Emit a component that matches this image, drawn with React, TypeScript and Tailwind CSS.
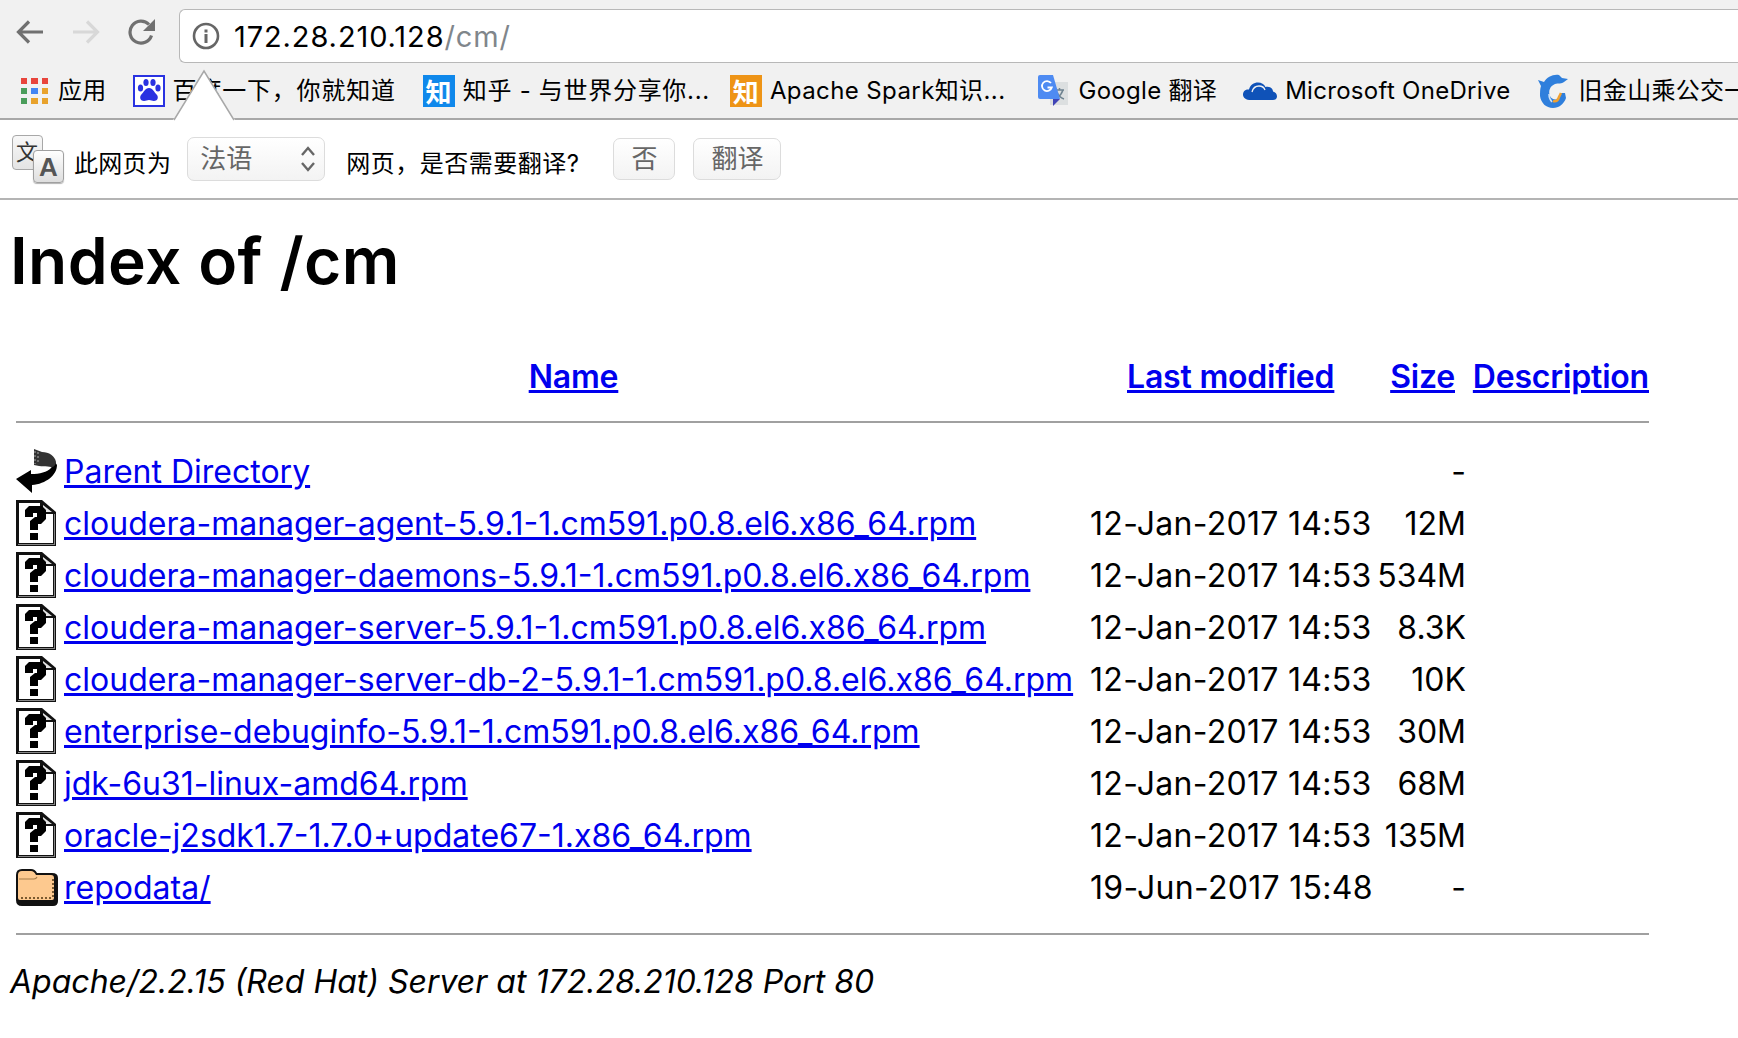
import React from "react";

const SANS = "font-['Inter','Noto_Sans_CJK_SC',sans-serif]";

function Unknown() {
  return (
    <svg width="40" height="46" viewBox="0 0 20 23" className="block">
      <path d="M0 0h13l7 6v17H0z" fill="#111" />
      <path d="M1.500 1.500h10.500v5.500h6.500v14.500H1.500z" fill="#fff" />
      <path d="M13.500 2.500l4.500 3.500h-4.500z" fill="#e4e4e4" />
      <path d="M19 7h.500v15.500H1v-.5h18z" fill="#888" />
      <path d="M4.500 8.500V5L6.500 3h6.500l2 2v4.500L12.500 12h-1.500v3H7v-4.500L9.500 8.500h1V6.500H8.500v2z" fill="#000" />
      <path d="M7 16.500h4v3.500H7z" fill="#000" />
    </svg>
  );
}

function Back() {
  return (
    <svg width="42" height="44" viewBox="0 0 42 44" className="block">
      <path d="M0 30L15 21V25C24 25 31 23 35 19L39 13L41 16C41 26 30 35 16 36V44Z" fill="#000" />
      <path d="M18 0L26 3C33 3 39 7 40 13C40 16 37 19 35 18C31 17 25 18 18 16Z" fill="#333" />
      <path d="M19 2v13M22 3v12" stroke="#aaa" strokeWidth="1" strokeDasharray="2 2" />
    </svg>
  );
}

function Folder() {
  return (
    <svg width="42" height="38" viewBox="0 0 42 38" className="block">
      <path d="M0 7q0-6 6-6h9q4 0 6 4h15q6 0 6 5v23q0 5-5 5H6q-6 0-6-6z" fill="#111" />
      <path d="M2 7q0-4 4-4h9q3 0 5 4h15q3 0 3 3v20q0 2-2 2H4q-2 0-2-2z" fill="#fdc98f" />
      <path d="M3 11h15q2 0 3-2" stroke="#a67c48" strokeWidth="1.200" fill="none" />
      <path d="M5 30h32M37 11v19" stroke="#7a5a30" strokeWidth="2" strokeDasharray="2 2" />
    </svg>
  );
}

function AppsIcon() {
  const colors = ["#e8453c", "#e8453c", "#e8453c", "#4a9d5b", "#4285f4", "#e8a22c", "#4a9d5b", "#e8a22c", "#e8a22c"];
  return (
    <div className="grid w-[27px] h-[26px] grid-cols-3 gap-[4px] shrink-0">
      {colors.map((c, i) => (
        <div key={i} style={{ backgroundColor: c }} />
      ))}
    </div>
  );
}

function BaiduIcon() {
  return (
    <svg width="32" height="32" viewBox="0 0 32 32" className="shrink-0">
      <rect x="1" y="1" width="30" height="30" fill="#fff" stroke="#2932e1" strokeWidth="2" />
      <g fill="#2932e1">
        <ellipse cx="7.5" cy="13" rx="2.6" ry="3.6" />
        <ellipse cx="13" cy="7.5" rx="2.6" ry="3.6" />
        <ellipse cx="20" cy="7.5" rx="2.6" ry="3.6" />
        <ellipse cx="25" cy="13" rx="2.6" ry="3.6" />
        <path d="M16 13c4 0 5 4 8 7 2 3 0 6-3 6-2 0-3-1-5-1s-3 1-5 1c-3 0-5-3-3-6 3-3 4-7 8-7z" />
      </g>
    </svg>
  );
}

function Zhi({ bg }: { bg: string }) {
  return (
    <div
      className={`w-[32px] h-[32px] shrink-0 flex items-center justify-center text-white text-[26px] font-bold leading-none font-['Noto_Sans_CJK_SC',sans-serif] ${bg}`}
    >
      知
    </div>
  );
}

function GoogleIcon() {
  return (
    <svg width="30" height="32" viewBox="0 0 30 32" className="shrink-0">
      <rect x="12" y="7" width="18" height="23" fill="#dcdfe0" />
      <path d="M17 15h9M21.500 13v2M19 23c3-2 5-5 6-8M19 17c1 3 4 6 7 7" stroke="#6f8390" strokeWidth="1.500" fill="none" />
      <path d="M2 0h13l7 24H2a2 2 0 0 1-2-2V2a2 2 0 0 1 2-2z" fill="#4e8bf2" />
      <path d="M15 24h7l-7 7z" fill="#3f43b5" />
      <path d="M13 8a5 5 0 1 0 .8 4.500H9.500" stroke="#fff" strokeWidth="1.800" fill="none" />
    </svg>
  );
}

function OneDrive() {
  return (
    <svg width="34" height="24" viewBox="0 0 34 24" className="shrink-0">
      <path
        d="M8 21C3 21 0 19 0 15.500 0 12 3 10 6 10.500 7 6 11 3.500 15 3.500c3.500 0 6 1.500 7.500 4.500C27 7 30 9.500 30 12.500c2.500.5 4 2.500 4 5 0 2.500-2 3.500-4 3.500z"
        fill="#0f52b8"
      />
      <path d="M9 13c1-4 4-6 7-6 3 0 5 1 6 4" stroke="#f1f1f1" strokeWidth="1.300" fill="none" />
    </svg>
  );
}

function Dolphin() {
  return (
    <svg width="32" height="34" viewBox="0 0 32 34" className="shrink-0">
      <path d="M1 6l6 2c3-5 9-8 15-7l3 3 6 1-4 3c-2 2-6 1-9 2-5 2-7 7-5 12 1 3 5 4 8 3l3-6h4l1 5c-2 6-7 10-13 10-7 0-12-5-13-12 0-4 0-7 1-10z" fill="#2f7fdc" />
      <path d="M16 27c3 1 5-1 6-4l2-4" stroke="#f0a030" strokeWidth="2.500" fill="none" />
      <path d="M12 20c0 3 1 6 3 8" stroke="#cfe3f7" strokeWidth="1.500" fill="none" />
    </svg>
  );
}

function TranslateIcon() {
  return (
    <div className="relative w-[52px] h-[50px] shrink-0">
      <div className="absolute left-0 top-[1px] w-[31px] h-[35px] rounded-[4px] border border-[#a8a8a8] bg-gradient-to-b from-[#f8f8f8] to-[#e4e4e4] pr-[1px] pb-[6px] flex items-center justify-center text-[22px] leading-none text-[#333] font-['Noto_Sans_CJK_SC',sans-serif]">
        文
      </div>
      <div className="absolute right-0 bottom-[1px] w-[31px] h-[33px] rounded-[4px] border border-[#a0a0a0] bg-gradient-to-b from-white to-[#dedede] shadow-[0_1px_1px_rgba(0,0,0,0.3)] flex items-center justify-center text-[26px] leading-none font-bold text-[#555] font-['Liberation_Sans',sans-serif]">
        A
      </div>
    </div>
  );
}

function Bookmark({ icon, label, className }: { icon: React.ReactNode; label: string; className: string }) {
  return (
    <div className={`flex items-center shrink-0 ${className}`}>
      {icon}
      <span className="whitespace-nowrap">{label}</span>
    </div>
  );
}

const files = [
  { name: "Parent Directory", date: "", size: "-", icon: "back" },
  { name: "cloudera-manager-agent-5.9.1-1.cm591.p0.8.el6.x86_64.rpm", date: "12-Jan-2017 14:53", size: "12M", icon: "file" },
  { name: "cloudera-manager-daemons-5.9.1-1.cm591.p0.8.el6.x86_64.rpm", date: "12-Jan-2017 14:53", size: "534M", icon: "file" },
  { name: "cloudera-manager-server-5.9.1-1.cm591.p0.8.el6.x86_64.rpm", date: "12-Jan-2017 14:53", size: "8.3K", icon: "file" },
  { name: "cloudera-manager-server-db-2-5.9.1-1.cm591.p0.8.el6.x86_64.rpm", date: "12-Jan-2017 14:53", size: "10K", icon: "file" },
  { name: "enterprise-debuginfo-5.9.1-1.cm591.p0.8.el6.x86_64.rpm", date: "12-Jan-2017 14:53", size: "30M", icon: "file" },
  { name: "jdk-6u31-linux-amd64.rpm", date: "12-Jan-2017 14:53", size: "68M", icon: "file" },
  { name: "oracle-j2sdk1.7-1.7.0+update67-1.x86_64.rpm", date: "12-Jan-2017 14:53", size: "135M", icon: "file" },
  { name: "repodata/", date: "19-Jun-2017 15:48", size: "-", icon: "folder" },
];

export default function App() {
  return (
    <div className={`relative h-[1038px] w-[1738px] overflow-hidden bg-white text-black ${SANS}`}>
      <header className="h-[120px] bg-[#f1f1f1] border-b-2 border-[#a8a8a8]">
        <div className="flex h-[63px] items-center">
          <div className="flex w-[179px] shrink-0 items-center pl-[16px] gap-[28px]">
            <svg width="28" height="28" viewBox="0 0 28 28" fill="none" stroke="#707070" strokeWidth="3.200">
              <path d="M27 14H3M13 3.500 2.500 14 13 24.500" />
            </svg>
            <svg width="28" height="28" viewBox="0 0 28 28" fill="none" stroke="#d8d8d8" strokeWidth="3.200">
              <path d="M1 14h24M15 3.500 25.500 14 15 24.500" />
            </svg>
            <svg width="28" height="28" viewBox="0 0 28 28" fill="none">
              <path d="M23.500 17.500A11 11 0 1 1 21 6.500" stroke="#707070" strokeWidth="3.200" />
              <path d="M27 1v12H15z" fill="#707070" />
            </svg>
          </div>
          <div className="flex h-[54px] mt-[9px] flex-1 items-center rounded-l-[6px] border border-r-0 border-[#b8b8b8] bg-white pl-[12px]">
            <svg width="28" height="28" viewBox="0 0 28 28" className="shrink-0">
              <circle cx="14" cy="14" r="12" fill="none" stroke="#666" strokeWidth="2.600" />
              <rect x="12.500" y="12" width="3" height="9" fill="#666" />
              <rect x="12.500" y="7.500" width="3" height="3" fill="#666" />
            </svg>
            <span className="ml-[14px] text-[29px] tracking-[0.9px] mt-[1px]">
              172.28.210.128<span className="text-[#80868b]">/cm/</span>
            </span>
          </div>
        </div>
        <div className="flex h-[55px] items-center text-[24px] leading-none tracking-[0.3px]">
          <Bookmark className="ml-[21px] gap-[10px]" icon={<AppsIcon />} label="应用" />
          <Bookmark className="ml-[26px] gap-[8px] tracking-[0.8px]" icon={<BaiduIcon />} label="百度一下，你就知道" />
          <Bookmark className="ml-[27px] gap-[8px] tracking-[0.7px]" icon={<Zhi bg="bg-[#0f88eb]" />} label="知乎 - 与世界分享你..." />
          <Bookmark className="ml-[20px] gap-[8px] tracking-[0.4px]" icon={<Zhi bg="bg-[#ee9416]" />} label="Apache Spark知识..." />
          <Bookmark className="ml-[33px] gap-[10px]" icon={<GoogleIcon />} label="Google 翻译" />
          <Bookmark className="ml-[26px] gap-[8px]" icon={<OneDrive />} label="Microsoft OneDrive" />
          <Bookmark className="ml-[26px] gap-[10px]" icon={<Dolphin />} label="旧金山乘公交一..." />
        </div>
      </header>

      <svg width="62" height="54" viewBox="0 0 62 54" className="absolute left-[173px] top-[68px]">
        <path d="M0 52 L31 3 L62 52 Z" fill="#fff" />
        <path d="M1 52 L31 3 L61 52" fill="none" stroke="#a8a8a8" strokeWidth="1.500" />
      </svg>

      <div className="h-[80px] border-b-2 border-[#b4b4b4] flex items-center pl-[12px] text-[24px] leading-none">
        <TranslateIcon />
        <span className="ml-[10px] mt-[10px] whitespace-nowrap tracking-[0.3px]">此网页为</span>
        <div className="ml-[16px] flex h-[44px] w-[138px] items-center justify-between rounded-[7px] border border-[#dcdcdc] bg-gradient-to-b from-white to-[#f3f3f3] pl-[12px] pr-[6px] text-[26px] text-[#666] mb-[1px]">
          <span>法语</span>
          <svg width="20" height="30" viewBox="0 0 20 30" fill="none" stroke="#666" strokeWidth="2.400">
            <path d="M4 11l6-7 6 7M4 19l6 7 6-7" />
          </svg>
        </div>
        <span className="ml-[21px] mt-[10px] whitespace-nowrap tracking-[0.5px]">网页，是否需要翻译?</span>
        <button className="ml-[34px] h-[42px] w-[62px] rounded-[7px] border border-[#dcdcdc] bg-gradient-to-b from-white to-[#f3f3f3] text-[26px] text-[#666]">否</button>
        <button className="ml-[18px] h-[42px] w-[88px] rounded-[7px] border border-[#dcdcdc] bg-gradient-to-b from-white to-[#f3f3f3] text-[26px] text-[#666]">翻译</button>
      </div>

      <main className="pl-[10px]">
        <h1 className="mt-[24px] text-[64px] leading-[74px] font-semibold tracking-[0.4px]">Index of /cm</h1>
        <div className="ml-[6px] w-[1633px] mt-[56px] text-[32px] leading-[40px]">
          <div className="grid grid-cols-[48px_1026px_376px_183px] h-[42px] items-center font-semibold pt-[3px] tracking-[-0.2px]">
            <span />
            <a href="#" className="text-center text-[#0000ee] underline pr-[7px]">Name</a>
            <div className="flex justify-between pr-[11px]">
              <a href="#" className="ml-[37px] text-[#0000ee] underline">Last modified</a>
              <a href="#" className="text-[#0000ee] underline">Size</a>
            </div>
            <a href="#" className="text-right text-[#0000ee] underline">Description</a>
          </div>
          <hr className="mt-[25px] mb-[22px] border-0 h-[2px] bg-[#a0a0a0]" />
          {files.map((f) => (
            <div key={f.name} className="grid grid-cols-[48px_1026px_376px] h-[52px] items-center">
              <span>{f.icon === "back" ? <Back /> : f.icon === "folder" ? <Folder /> : <Unknown />}</span>
              <a href="#" className="text-[#0000ee] underline whitespace-nowrap pt-[2px]">{f.name}</a>
              <div className="flex justify-between whitespace-nowrap pt-[2px]">
                <span className="tracking-[0.3px]">{f.date}</span>
                <span>{f.size}</span>
              </div>
            </div>
          ))}
          <hr className="mt-[20px] border-0 h-[2px] bg-[#a0a0a0]" />
        </div>
        <address className="mt-[27px] text-[32px] leading-[40px] italic">Apache/2.2.15 (Red Hat) Server at 172.28.210.128 Port 80</address>
      </main>
    </div>
  );
}
